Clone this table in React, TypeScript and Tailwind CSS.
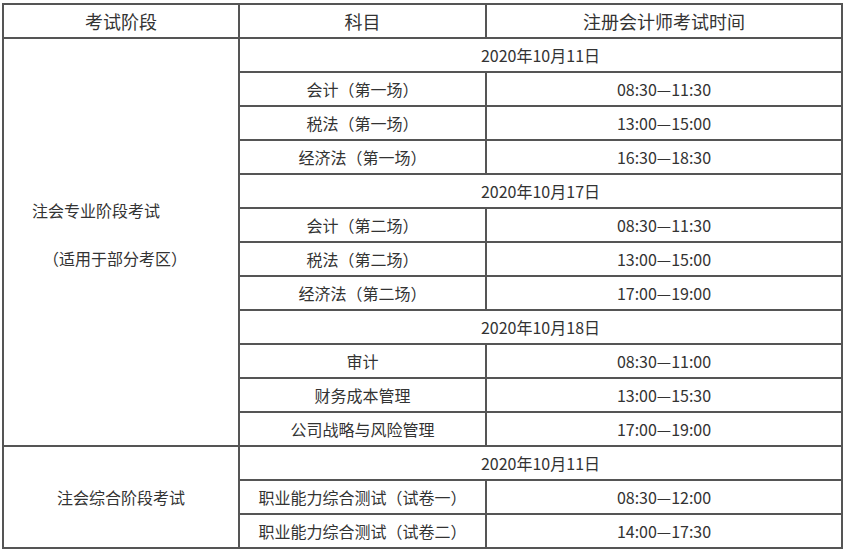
import { Fragment } from 'react';

const font = '[font-family:"Noto_Sans_CJK_SC","Microsoft_YaHei",sans-serif]';

type Item = { subject: string; time: string };
type Day = { date: string; items: Item[] };

const proDays: Day[] = [
  {
    date: '2020年10月11日',
    items: [
      { subject: '会计（第一场）', time: '08:30—11:30' },
      { subject: '税法（第一场）', time: '13:00—15:00' },
      { subject: '经济法（第一场）', time: '16:30—18:30' },
    ],
  },
  {
    date: '2020年10月17日',
    items: [
      { subject: '会计（第二场）', time: '08:30—11:30' },
      { subject: '税法（第二场）', time: '13:00—15:00' },
      { subject: '经济法（第二场）', time: '17:00—19:00' },
    ],
  },
  {
    date: '2020年10月18日',
    items: [
      { subject: '审计', time: '08:30—11:00' },
      { subject: '财务成本管理', time: '13:00—15:30' },
      { subject: '公司战略与风险管理', time: '17:00—19:00' },
    ],
  },
];

const compDays: Day[] = [
  {
    date: '2020年10月11日',
    items: [
      { subject: '职业能力综合测试（试卷一）', time: '08:30—12:00' },
      { subject: '职业能力综合测试（试卷二）', time: '14:00—17:30' },
    ],
  },
];

const cell = 'border border-[#555] h-[34px] p-0 text-center align-middle';

function DayRows({ days, first }: { days: Day[]; first: React.ReactNode }) {
  const span = days.reduce((n, d) => n + d.items.length + 1, 0);
  return (
    <>
      {days.map((d, di) => (
        <Fragment key={d.date + di}>
          <tr>
            {di === 0 && (
              <td rowSpan={span} className="border border-[#555] p-0 align-middle">
                {first}
              </td>
            )}
            <td colSpan={2} className={cell}>
              {d.date}
            </td>
          </tr>
          {d.items.map((it) => (
            <tr key={it.subject}>
              <td className={cell}>{it.subject}</td>
              <td className={cell}>{it.time}</td>
            </tr>
          ))}
        </Fragment>
      ))}
    </>
  );
}

export default function App() {
  return (
    <div className={`bg-white w-[845px] h-[552px] pt-[3px] pl-[2px] ${font} text-[#333]`}>
      <table className="table-fixed border-separate border-spacing-0 border border-[#555] w-[841px] text-[16px] leading-[24px]">
        <colgroup>
          <col className="w-[236px]" />
          <col className="w-[247px]" />
          <col />
        </colgroup>
        <thead>
          <tr className="text-[18px]">
            <th className={`${cell} font-normal`}>考试阶段</th>
            <th className={`${cell} font-normal`}>科目</th>
            <th className={`${cell} font-normal`}>注册会计师考试时间</th>
          </tr>
        </thead>
        <tbody>
          <DayRows
            days={proDays}
            first={
              <div className="flex flex-col gap-[24px] mb-[16px]">
                <p className="pl-[28px]">注会专业阶段考试</p>
                <p className="pl-[39px]">（适用于部分考区）</p>
              </div>
            }
          />
          <DayRows days={compDays} first={<p className="text-center">注会综合阶段考试</p>} />
        </tbody>
      </table>
    </div>
  );
}
